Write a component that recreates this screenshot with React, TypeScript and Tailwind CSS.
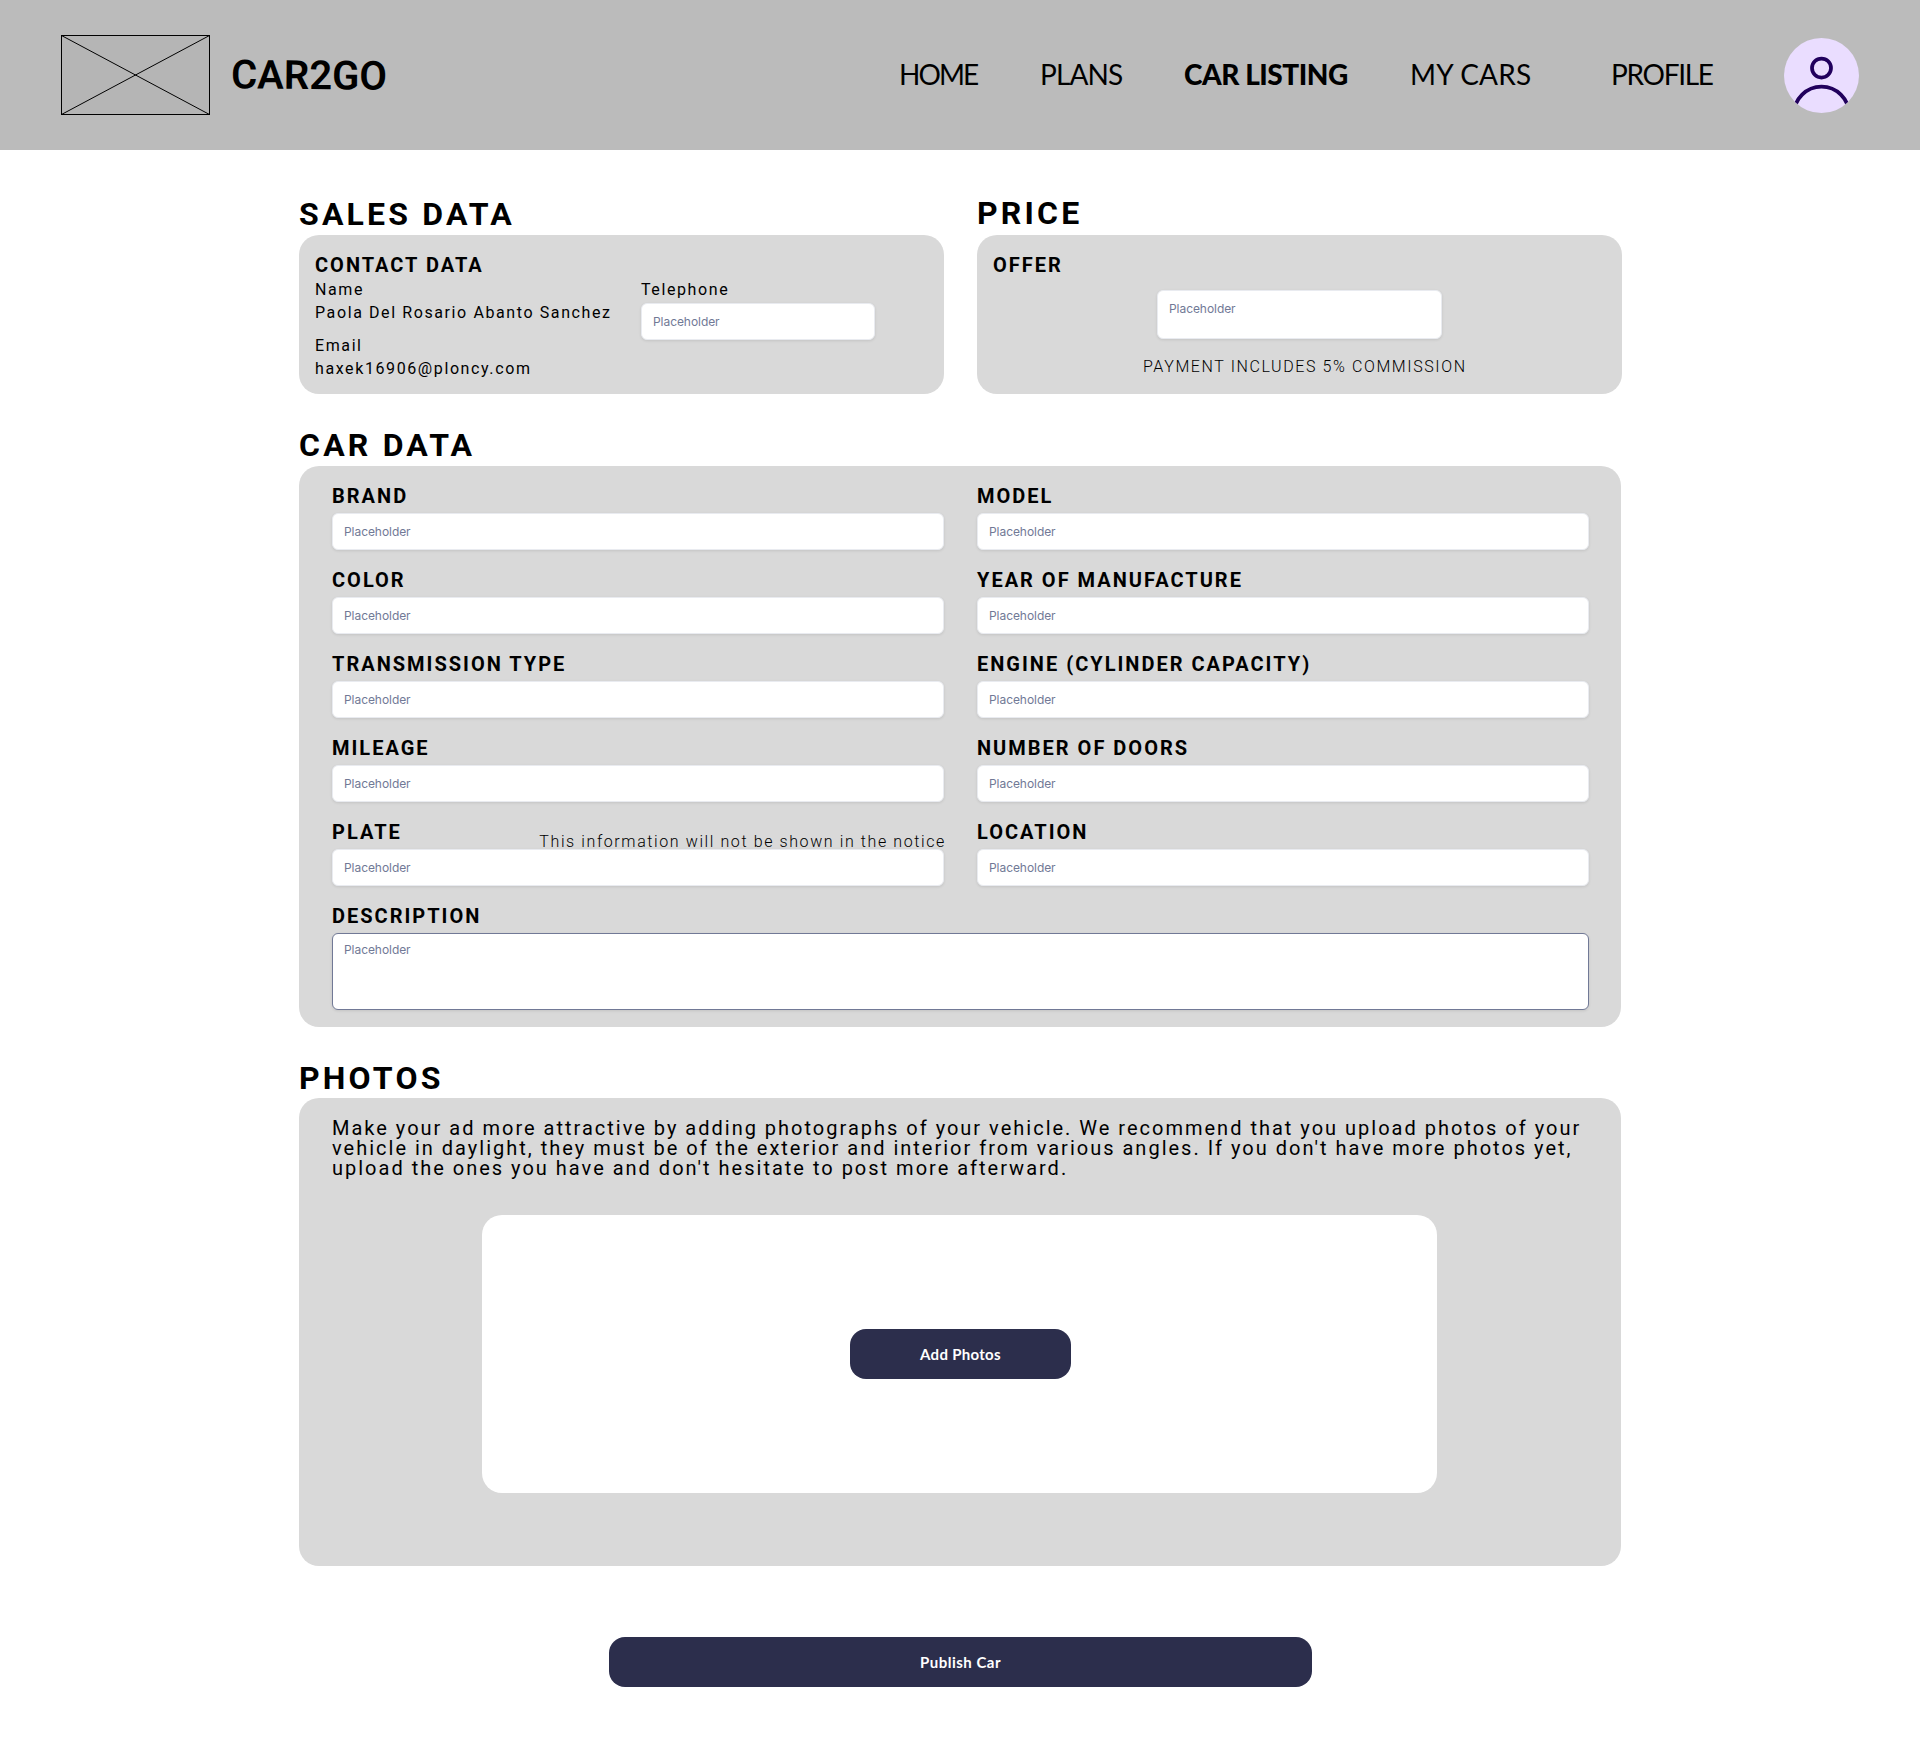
import React from "react";

const carFields: [string, string][] = [
  ["BRAND", "MODEL"],
  ["COLOR", "YEAR OF MANUFACTURE"],
  ["TRANSMISSION TYPE", "ENGINE (CYLINDER CAPACITY)"],
  ["MILEAGE", "NUMBER OF DOORS"],
  ["PLATE", "LOCATION"],
];

function Title({ children, className = "" }: { children: React.ReactNode; className?: string }) {
  return (
    <h2 className={`text-[32px] leading-8 font-bold tracking-[3.2px] whitespace-nowrap ${className}`}>
      {children}
    </h2>
  );
}

function Label({ children }: { children: React.ReactNode }) {
  return <div className="text-xl leading-5 font-bold tracking-[2px] whitespace-nowrap">{children}</div>;
}

function Field({
  className = "h-[37px] items-center",
  border = "border-[#e9ebf0]",
}: {
  className?: string;
  border?: string;
}) {
  return (
    <div
      className={`flex rounded-md border bg-white px-[11px] font-['Inter',sans-serif] text-xs leading-4 tracking-[-0.06px] text-[#717996] shadow-[0_1px_3px_rgba(0,0,0,0.1)] ${border} ${className}`}
    >
      Placeholder
    </div>
  );
}

function Logo() {
  return (
    <svg width="149" height="80" viewBox="0 0 149 80" fill="none" stroke="#000">
      <rect x="0.5" y="0.5" width="148" height="79" fill="#b5b5b5" />
      <path d="M0.5 0.5L148.5 79.5M148.5 0.5L0.5 79.5" strokeWidth="1" />
    </svg>
  );
}

function Avatar() {
  return (
    <svg width="75" height="75" viewBox="0 0 75 75" fill="none">
      <clipPath id="avatar">
        <circle cx="37.5" cy="37.5" r="37.5" />
      </clipPath>
      <g clipPath="url(#avatar)">
        <rect width="75" height="75" fill="#EADDFF" />
        <circle cx="37.5" cy="30" r="9.5" stroke="#21005D" strokeWidth="3.75" />
        <circle cx="37.5" cy="76" r="27.4" stroke="#21005D" strokeWidth="3.75" />
      </g>
    </svg>
  );
}

export default function App() {
  return (
    <div className="min-h-[1763px] w-[1920px] bg-white font-['Roboto',sans-serif] text-black">
      <header className="flex h-[150px] items-center bg-[#bbbbbb] pl-[61px]">
        <Logo />
        <div className="ml-[21px] w-[668px] pt-[2px]">
          <span className="inline-block rotate-[0.5deg] text-[40px] leading-[48px] font-semibold">CAR2GO</span>
        </div>
        <nav className="flex pb-[2px] font-['Lato',sans-serif] text-[28px] leading-[34px] whitespace-nowrap">
          <span className="w-[141px] tracking-[-1.9px]">HOME</span>
          <span className="w-[144px] tracking-[-0.9px]">PLANS</span>
          <span className="w-[226px] font-black tracking-[-0.45px]">CAR LISTING</span>
          <span className="w-[201px] tracking-[0.2px]">MY CARS</span>
          <span className="w-[173px] tracking-[-1.3px]">PROFILE</span>
        </nav>
        <Avatar />
      </header>

      <main className="ml-[299px] w-[1323px] pt-12">
        <div className="grid grid-cols-[645px_645px] gap-x-[33px]">
          <section>
            <Title>SALES DATA</Title>
            <div className="mt-[5px] h-[159px] rounded-[20px] bg-[#d9d9d9] px-4 pt-5">
              <Label>CONTACT DATA</Label>
              <div className="flex text-base leading-[23px] tracking-[1.6px] whitespace-nowrap">
                <div className="w-[326px] pt-[3px]">
                  <p>Name</p>
                  <p>Paola Del Rosario Abanto Sanchez</p>
                  <p className="mt-[10px]">Email</p>
                  <p>haxek16906@ploncy.com</p>
                </div>
                <div className="w-[234px] pt-[3px]">
                  <p className="mb-[2px]">Telephone</p>
                  <Field />
                </div>
              </div>
            </div>
          </section>
          <section>
            <Title className="relative -top-px">PRICE</Title>
            <div className="mt-[5px] h-[159px] rounded-[20px] bg-[#d9d9d9] px-4 pt-5">
              <Label>OFFER</Label>
              <Field className="mt-[15px] ml-[164px] h-[49px] w-[285px] items-start pt-[10px]" />
              <p className="mt-[18px] ml-[150px] text-base leading-5 font-light tracking-[1.6px] whitespace-nowrap">
                PAYMENT INCLUDES 5% COMMISSION
              </p>
            </div>
          </section>
        </div>

        <section className="mt-[35px] w-[1322px]">
          <Title>CAR DATA</Title>
          <div className="mt-[5px] h-[561px] rounded-[20px] bg-[#d9d9d9] px-[33px] pt-5">
            <div className="grid grid-cols-[612px_612px] gap-x-[33px] gap-y-[20px]">
              {carFields.flat().map((name) => (
                <div key={name} className="relative h-16">
                  <Label>{name}</Label>
                  {name === "PLATE" && (
                    <span className="absolute top-3 -right-[2px] text-base leading-4 font-light tracking-[1.6px] whitespace-nowrap">
                      This information will not be shown in the notice
                    </span>
                  )}
                  <Field className="mt-[7px] h-[37px] items-center" />
                </div>
              ))}
            </div>
            <div className="mt-5">
              <Label>DESCRIPTION</Label>
              <Field border="border-[#717996]" className="mt-[7px] h-[77px] w-[1257px] items-start pt-2" />
            </div>
          </div>
        </section>

        <section className="mt-[35px] w-[1322px]">
          <Title>PHOTOS</Title>
          <div className="mt-1 h-[468px] rounded-[20px] bg-[#d9d9d9] pt-5">
            <p className="ml-[33px] text-xl leading-5 tracking-[2px] whitespace-nowrap">
              Make your ad more attractive by adding photographs of your vehicle. We recommend that you upload photos of your
              <br />
              vehicle in daylight, they must be of the exterior and interior from various angles. If you don't have more photos yet,
              <br />
              upload the ones you have and don't hesitate to post more afterward.
            </p>
            <div className="mt-[37px] ml-[183px] h-[278px] w-[955px] rounded-[20px] bg-white pt-[114px] pl-[368px]">
              <button className="h-[50px] w-[221px] rounded-2xl bg-[#2c2e4c] font-['Lato',sans-serif] text-[15px] font-bold tracking-[0.3px] text-white">
                Add Photos
              </button>
            </div>
          </div>
        </section>

        <button className="mt-[71px] ml-[310px] h-[50px] w-[703px] rounded-2xl bg-[#2c2e4c] font-['Lato',sans-serif] text-[15px] font-bold tracking-[0.5px] text-white">
          Publish Car
        </button>
      </main>
    </div>
  );
}
